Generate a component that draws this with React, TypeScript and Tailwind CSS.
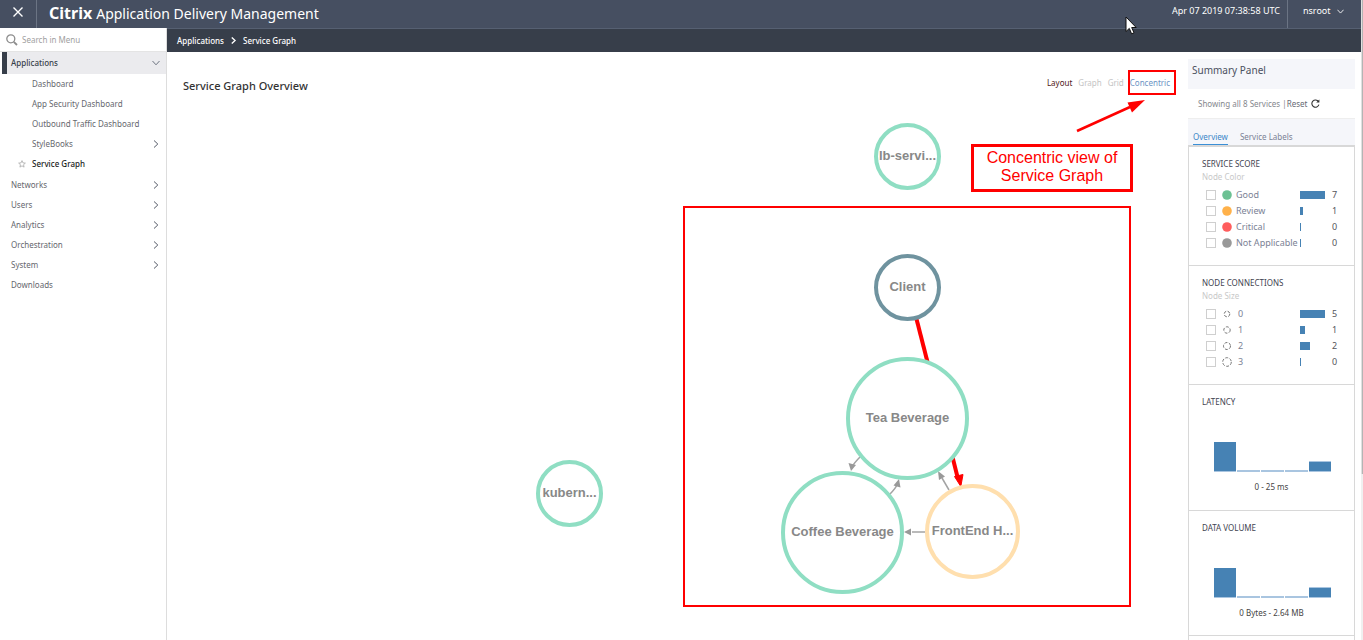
import React from "react";

type NavItem = { label: string; expandable?: boolean };

const subItems: NavItem[] = [
  { label: "Dashboard" },
  { label: "App Security Dashboard" },
  { label: "Outbound Traffic Dashboard" },
  { label: "StyleBooks", expandable: true },
];

const navItems: NavItem[] = [
  { label: "Networks", expandable: true },
  { label: "Users", expandable: true },
  { label: "Analytics", expandable: true },
  { label: "Orchestration", expandable: true },
  { label: "System", expandable: true },
  { label: "Downloads" },
];

function Chevron({ className }: { className: string }) {
  return (
    <svg viewBox="0 0 8 8" className={className} fill="none" stroke="currentColor" aria-hidden="true">
      <path d="M2 0.5 5.8 4 2 7.5" />
    </svg>
  );
}

function Sidebar() {
  return (
    <nav className="flex w-[167px] shrink-0 flex-col border-r border-[#dddddd] bg-white text-[8px] leading-5 text-[#66676e]">
      <label className="flex h-6 items-center border-b border-[#e4e4e4] pl-1.5">
        <svg viewBox="0 0 12 12" className="h-3 w-3 text-[#8d8d8d]" fill="none" stroke="currentColor" strokeWidth="1.3" aria-hidden="true">
          <circle cx="4.8" cy="4.8" r="4" />
          <path d="M7.8 7.8 11 11" strokeWidth="1.8" />
        </svg>
        <input
          type="text"
          aria-label="Search in Menu"
          placeholder="Search in Menu"
          className="ml-1 w-32 bg-transparent text-[8px] outline-none placeholder:text-[#a0a0a0]"
        />
      </label>
      <a href="#applications" className="ml-0.5 flex h-[22px] items-center border-l-[5px] border-[#373e4a] bg-[#ebebee] pl-1 font-medium text-[#373e4a]">
        Applications
        <Chevron className="mr-1.5 ml-auto h-2 w-2 rotate-90 text-[#6d7480]" />
      </a>
      {subItems.map((item) => (
        <a key={item.label} href={"#" + item.label} className="flex h-5 items-center pr-1.5 pl-8">
          {item.label}
          {item.expandable && <Chevron className="ml-auto h-2 w-2 text-[#555b68]" />}
        </a>
      ))}
      <a href="#service-graph" className="mb-px flex h-5 items-center pl-[18px] font-medium text-[#1b1b1b]">
        <svg viewBox="0 0 10 10" className="mr-1.5 h-2 w-2" fill="none" stroke="#aaaaaa" strokeWidth="1" aria-hidden="true">
          <path d="m5 .8 1.2 2.8 3 .3-2.300 2 .7 3L5 7.300 2.400 8.900l.7-3-2.300-2 3-.3z" />
        </svg>
        Service Graph
      </a>
      {navItems.map((item) => (
        <a key={item.label} href={"#" + item.label} className="flex h-5 items-center pr-1.5 pl-[11px]">
          {item.label}
          {item.expandable && <Chevron className="ml-auto h-2 w-2 text-[#555b68]" />}
        </a>
      ))}
    </nav>
  );
}

type GraphNode = { label: string; box: string };

const nodes: GraphNode[] = [
  { label: "lb-servi...", box: "left-[707px] top-[71px] h-[67px] w-[67px] border-[#8fdec3]" },
  { label: "Client", box: "left-[707px] top-[202px] h-[67px] w-[67px] border-[#6f939f]" },
  { label: "Tea Beverage", box: "left-[679px] top-[305px] h-[123px] w-[123px] border-[#8fdec3]" },
  { label: "Coffee Beverage", box: "left-[614px] top-[419px] h-[123px] w-[123px] border-[#8fdec3]" },
  { label: "FrontEnd H...", box: "left-[758px] top-[432px] h-[95px] w-[95px] border-[#ffdfae]" },
  { label: "kubern...", box: "left-[369px] top-[408px] h-[67px] w-[67px] border-[#8fdec3]" },
];

function GraphCanvas() {
  return (
    <div className="absolute inset-0 overflow-hidden">
      <svg className="absolute top-0 left-0" width="1020" height="588" aria-hidden="true">
        <g stroke="#ff0000" strokeWidth="4" fill="#ff0000">
          <path d="M749 265 761 312" />
          <path d="M785 403 791 427" />
          <path d="M787.500 424.500 796 422.500 793.800 434.500z" strokeWidth="1" />
        </g>
        <g stroke="#a3a3a3" strokeWidth="1.500" fill="none">
          <path d="M693 405Q687 411 685 415" />
          <path d="M723 442Q729 436 731 431" />
          <path d="M782 438 775 426" />
          <path d="M758 480H745" />
        </g>
        <g fill="#999999">
          <path d="M684 419 681.500 411 689 413z" />
          <path d="M732 427 726.500 433.500 733.500 435.500z" />
          <path d="M771 419 778 424.500 772 428z" />
          <path d="M737 480 744 476.500V483.500z" />
        </g>
      </svg>
      {nodes.map((n) => (
        <div
          key={n.label}
          className={
            "absolute flex items-center justify-center rounded-full border-4 bg-white pb-0.5 font-['Liberation_Sans',sans-serif] text-[13px] font-bold whitespace-nowrap text-[#888888] " +
            n.box
          }
        >
          {n.label}
        </div>
      ))}
    </div>
  );
}

function Annotations() {
  return (
    <div className="pointer-events-none absolute inset-0">
      <div className="absolute top-[154px] left-[516px] h-[401px] w-[448px] border-2 border-[#ff0000]" />
      <div className="absolute top-[18px] left-[961px] h-[25px] w-[48px] border-2 border-[#ff0000]" />
      <div className="absolute top-[92px] left-[804px] flex h-12 w-[162px] items-center justify-center border-3 border-[#ff0000] bg-white pb-0.5 text-center font-['Liberation_Sans',sans-serif] text-base leading-[18px] text-[#ff0000]">
        Concentric view of
        <br />
        Service Graph
      </div>
      <svg className="absolute top-0 left-0" width="1020" height="100" aria-hidden="true">
        <path d="M910 79 963 55" stroke="#ff0000" strokeWidth="2.500" />
        <path d="M978 48 960.500 50.500 965 60.500z" fill="#ff0000" />
      </svg>
    </div>
  );
}

type Facet = { label: string; count: number; bar: string; marker: React.ReactNode };

const dot = (color: string) => (
  <svg viewBox="0 0 10 10" className="h-2.5 w-2.5" aria-hidden="true">
    <circle cx="5" cy="5" r="4.8" fill={color} />
  </svg>
);

const ring = (radius: number) => (
  <svg viewBox="0 0 10 10" className="h-2.5 w-2.5" fill="none" stroke="#777777" strokeDasharray="3 1.5" aria-hidden="true">
    <circle cx="5" cy="5" r={radius} />
  </svg>
);

const scores: Facet[] = [
  { label: "Good", count: 7, bar: "w-[25px]", marker: dot("#6cc193") },
  { label: "Review", count: 1, bar: "w-[3px]", marker: dot("#ffb14a") },
  { label: "Critical", count: 0, bar: "w-px", marker: dot("#ff5d5d") },
  { label: "Not Applicable", count: 0, bar: "w-px", marker: dot("#999999") },
];

const connections: Facet[] = [
  { label: "0", count: 5, bar: "w-[25px]", marker: ring(2.8) },
  { label: "1", count: 1, bar: "w-[5px]", marker: ring(3.2) },
  { label: "2", count: 2, bar: "w-[10px]", marker: ring(3.5) },
  { label: "3", count: 0, bar: "w-px", marker: ring(4.3) },
];

function FacetSection({ title, hint, rows, labelGap }: { title: string; hint: string; rows: Facet[]; labelGap: string }) {
  return (
    <section className="h-[119px] border-b border-[#d8d8d8] pt-2.5 pl-[13px]">
      <h3 className="text-[8px] leading-[13px] text-[#3f4451]">{title}</h3>
      <p className="text-[8px] leading-[13px] text-[#c8c8c8]">{hint}</p>
      <ul className="mt-1">
        {rows.map((r) => (
          <li key={r.label} className="flex h-4 items-center pl-1">
            <label className="flex w-[94px] items-center whitespace-nowrap text-[9px] leading-4 text-[#7b8295]">
              <input type="checkbox" className="mr-1.5 h-2.5 w-2.5 shrink-0 appearance-none border border-[#cfcfcf] bg-white" />
              {r.marker}
              <span className={labelGap}>{r.label}</span>
            </label>
            <span className="flex w-[32px] items-center">
              <span className={"h-2 bg-[#4682b4] " + r.bar} />
            </span>
            <span className="text-[9px] leading-4 text-[#55565c]">{r.count}</span>
          </li>
        ))}
      </ul>
    </section>
  );
}

function HistogramSection({ title, range, height }: { title: string; range: string; height: string }) {
  return (
    <section className={"border-b border-[#d8d8d8] pt-2.5 " + height}>
      <h3 className="pl-[13px] text-[8px] leading-[13px] text-[#3f4451]">{title}</h3>
      <svg viewBox="0 0 117 30" className="mt-[34px] ml-[25px] h-[30px] w-[117px]" aria-hidden="true">
        <g fill="#a9c5e0">
          <rect x="0" y="28" width="22" height="2" />
          <rect x="23" y="28" width="23" height="2" />
          <rect x="47" y="28" width="23" height="2" />
          <rect x="71" y="28" width="23" height="2" />
          <rect x="95" y="19" width="22" height="11" />
        </g>
        <rect x="0" y="0" width="22" height="29" fill="#4682b4" />
        <rect x="95" y="20" width="22" height="9" fill="#4682b4" />
      </svg>
      <p className="mt-2 text-center text-[8px] leading-[13px] text-[#444444]">{range}</p>
    </section>
  );
}

function SummaryPanel() {
  return (
    <aside className="mt-[7px] mr-1.5 w-[167px] shrink-0">
      <h2 className="h-[30px] bg-[#f5f6fa] pl-1 text-[10px] leading-[22px] text-[#4a5060]">Summary Panel</h2>
      <div className="flex h-[30px] items-center border-b border-[#eeeeee] pl-2.5 text-[8px] text-[#85878d]">
        Showing all 8 Services |
        <button type="button" className="flex items-center gap-1 text-[#666a75]">
          Reset
          <svg viewBox="0 0 10 10" className="h-[9px] w-[9px]" fill="none" stroke="#333333" strokeWidth="1.200" aria-hidden="true">
            <path d="M8.300 2.900A4 4 0 1 0 8.800 6.300" />
            <path d="M9.300.5V4H5.800z" fill="#333333" stroke="none" />
          </svg>
        </button>
      </div>
      <div className="flex h-7 items-end gap-3 border-b-2 border-[#d8d8d8] bg-[#f5f6fa] px-[5px] text-[8px]">
        <button type="button" className="h-4 border-b border-[#3b8fd6] text-[#3b86c8]">Overview</button>
        <button type="button" className="h-4 border-b border-transparent text-[#7b8295]">Service Labels</button>
      </div>
      <div className="border-x border-[#d8d8d8]">
        <FacetSection title="SERVICE SCORE" hint="Node Color" rows={scores} labelGap="ml-1" />
        <FacetSection title="NODE CONNECTIONS" hint="Node Size" rows={connections} labelGap="ml-1.5" />
        <HistogramSection title="LATENCY" range="0 - 25 ms" height="h-[126px]" />
        <HistogramSection title="DATA VOLUME" range="0 Bytes - 2.64 MB" height="h-[125px]" />
        <div className="h-5" />
      </div>
    </aside>
  );
}

export default function App() {
  return (
    <div className="relative flex h-screen overflow-hidden bg-white font-['Noto_Sans',sans-serif]">
      <div className="flex min-w-0 flex-1 flex-col">
        <header className="flex h-7 shrink-0 items-stretch bg-[#464f61] text-white">
          <button type="button" aria-label="Close menu" className="flex w-[37px] items-center justify-center border-r border-[#6b7484] pb-1">
            <svg viewBox="0 0 12 12" className="h-3 w-3" stroke="white" strokeWidth="1.400" aria-hidden="true">
              <path d="M1.500 1.500 10.500 10.500M10.500 1.500 1.500 10.500" />
            </svg>
          </button>
          <h1 className="flex items-baseline gap-1 pl-3 text-sm leading-[26px]">
            <strong className="text-base leading-[26px] font-bold">Citrix</strong>
            Application Delivery Management
          </h1>
          <time className="mr-[7px] ml-auto text-[9px] leading-[22px]">Apr 07 2019 07:38:58 UTC</time>
          <button type="button" className="flex w-[74px] border-l border-[#6b7484] pl-[15px] text-[9px] leading-[22px]">
            nsroot
            <Chevron className="mt-2 ml-1.5 h-[7px] w-[7px] rotate-90" />
          </button>
        </header>
        <div className="flex min-h-0 flex-1">
          <Sidebar />
          <div className="flex min-w-0 flex-1 flex-col">
            <div className="flex h-6 shrink-0 items-center gap-1.5 border-t border-[#566072] bg-[#373e4a] pl-2.5 text-[8px] font-medium text-white">
              <a href="#applications">Applications</a>
              <Chevron className="h-[7px] w-[7px] stroke-[1.500]" />
              <a href="#service-graph">Service Graph</a>
            </div>
            <div className="flex min-h-0 flex-1">
              <main className="relative min-w-0 flex-1">
                <GraphCanvas />
                <div className="relative flex items-center pt-6 pr-[18px] pl-4">
                  <h2 className="text-[11px] leading-5 font-medium text-[#333333]">Service Graph Overview</h2>
                  <div className="ml-auto flex gap-1.5 pb-1.5 text-[8px] leading-3 text-[#c4c4c4]">
                    <span className="text-[#502020]">Layout</span>
                    <button type="button">Graph</button>
                    <button type="button">Grid</button>
                    <button type="button" className="text-[#6c94c4]">Concentric</button>
                  </div>
                </div>
                <Annotations />
              </main>
              <SummaryPanel />
            </div>
          </div>
        </div>
      </div>
      <div className="w-0.5 shrink-0 bg-[#f0f0f0]">
        <div className="h-[74%] border-l border-[#e0e0e0] bg-[#b4b4b4]" />
      </div>
      <svg viewBox="0 0 12 19" className="absolute top-4 left-[1125px] h-[19px] w-3" aria-hidden="true">
        <path d="M1 1V15.500L4.300 12.400 6.600 17.800 9 16.800 6.700 11.500H11.200z" fill="white" stroke="#111111" />
      </svg>
    </div>
  );
}
